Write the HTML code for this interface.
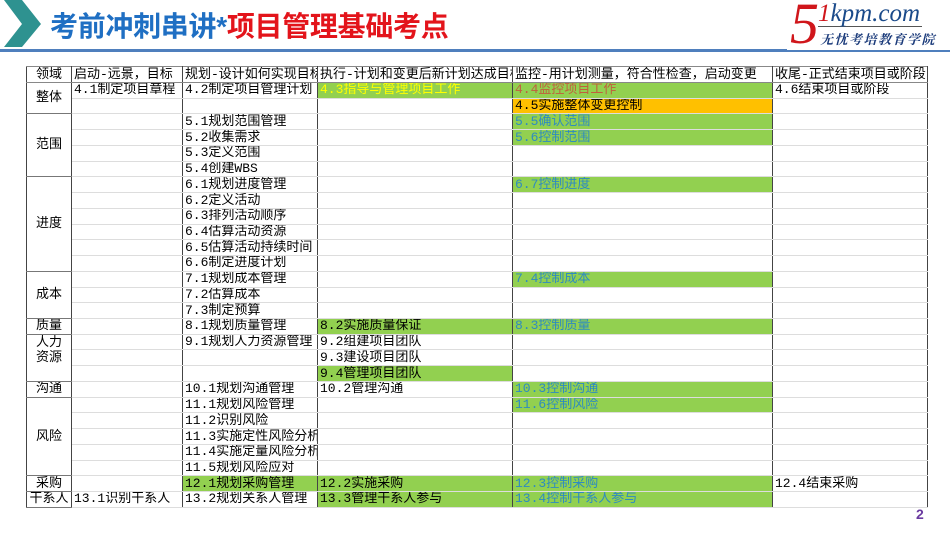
<!DOCTYPE html>
<html><head><meta charset="utf-8"><style>
body{margin:0;width:950px;height:535px;background:#fff;position:relative;overflow:hidden;font-family:"Liberation Sans","Noto Sans CJK SC",sans-serif}
.t{position:absolute;left:50px;top:5px;font-size:28px;font-weight:bold;letter-spacing:-0.3px;white-space:nowrap}
table{position:absolute;left:26px;top:66px;width:901px;border-collapse:collapse;table-layout:fixed;font-size:13px;font-family:"Liberation Mono","Noto Sans CJK SC",sans-serif}
td{height:14.74px;padding:0 0 0 2px;border-left:1px solid #444;border-right:1px solid #444;border-top:1px solid #ddd;border-bottom:1px solid #ddd;white-space:nowrap;overflow:hidden;line-height:14px;color:#000}
tr.h td{height:15px;border-bottom:1px solid #888;border-top:1px solid #888}
.d{text-align:center;padding:0;border-bottom:1px solid #777;border-top:1px solid #777}
.g{background:#92d050}.o{background:#ffc000}
.b{color:#2e8bc0}
</style></head><body>
<svg style="position:absolute;left:0;top:0" width="45" height="50"><polygon points="4,0 22,0 41,24 22,47 4,47 22,24" fill="#2e9290"/></svg>
<div style="position:absolute;left:0;top:49px;width:950px;height:3px;background:#4f7fbd"></div>
<div class="t"><span style="color:#1f6fc3">考前冲刺串讲*</span><span style="color:#e3141b">项目管理基础考点</span></div>
<div style="position:absolute;left:787px;top:0;width:163px;height:50px;background:#fff"></div>
<div style="position:absolute;left:790px;top:-4px;font-family:'Liberation Serif',serif;font-style:italic;font-size:58px;color:#d0161b;line-height:56px">5</div>
<div style="position:absolute;left:818px;top:1px;font-family:'Liberation Serif',serif;font-style:italic;font-size:25px;color:#1a4a8a;line-height:25px;border-bottom:1px solid #555;padding-right:2px"><span style="color:#d0161b">1</span>kpm.com</div>
<div style="position:absolute;left:820px;top:29px;font-family:'Noto Serif CJK SC',serif;font-weight:bold;font-style:italic;font-size:13px;color:#1a3a7a;letter-spacing:1.5px">无忧考培教育学院</div>
<table>
<colgroup><col style="width:45px"><col style="width:111px"><col style="width:135px"><col style="width:195px"><col style="width:260px"><col style="width:155px"></colgroup>
<tr class="h"><td class="d">领域</td><td>启动-远景，目标</td><td>规划-设计如何实现目标</td><td>执行-计划和变更后新计划达成目标</td><td>监控-用计划测量，符合性检查，启动变更</td><td>收尾-正式结束项目或阶段</td></tr>
<tr><td class="d" rowspan="2">整体</td><td>4.1制定项目章程</td><td>4.2制定项目管理计划</td><td class="g" style="color:#ffff00">4.3指导与管理项目工作</td><td class="g" style="color:#c0603d">4.4监控项目工作</td><td>4.6结束项目或阶段</td></tr>
<tr><td></td><td></td><td></td><td class="o">4.5实施整体变更控制</td><td></td></tr>
<tr><td class="d" rowspan="4">范围</td><td></td><td>5.1规划范围管理</td><td></td><td class="g b">5.5确认范围</td><td></td></tr>
<tr><td></td><td>5.2收集需求</td><td></td><td class="g b">5.6控制范围</td><td></td></tr>
<tr><td></td><td>5.3定义范围</td><td></td><td></td><td></td></tr>
<tr><td></td><td>5.4创建WBS</td><td></td><td></td><td></td></tr>
<tr><td class="d" rowspan="6">进度</td><td></td><td>6.1规划进度管理</td><td></td><td class="g b">6.7控制进度</td><td></td></tr>
<tr><td></td><td>6.2定义活动</td><td></td><td></td><td></td></tr>
<tr><td></td><td>6.3排列活动顺序</td><td></td><td></td><td></td></tr>
<tr><td></td><td>6.4估算活动资源</td><td></td><td></td><td></td></tr>
<tr><td></td><td>6.5估算活动持续时间</td><td></td><td></td><td></td></tr>
<tr><td></td><td>6.6制定进度计划</td><td></td><td></td><td></td></tr>
<tr><td class="d" rowspan="3">成本</td><td></td><td>7.1规划成本管理</td><td></td><td class="g b">7.4控制成本</td><td></td></tr>
<tr><td></td><td>7.2估算成本</td><td></td><td></td><td></td></tr>
<tr><td></td><td>7.3制定预算</td><td></td><td></td><td></td></tr>
<tr><td class="d">质量</td><td></td><td>8.1规划质量管理</td><td class="g">8.2实施质量保证</td><td class="g b">8.3控制质量</td><td></td></tr>
<tr><td class="d" rowspan="3" style="line-height:15px;vertical-align:top">人力<br>资源</td><td></td><td>9.1规划人力资源管理</td><td>9.2组建项目团队</td><td></td><td></td></tr>
<tr><td></td><td></td><td>9.3建设项目团队</td><td></td><td></td></tr>
<tr><td></td><td></td><td class="g">9.4管理项目团队</td><td></td><td></td></tr>
<tr><td class="d">沟通</td><td></td><td>10.1规划沟通管理</td><td>10.2管理沟通</td><td class="g b">10.3控制沟通</td><td></td></tr>
<tr><td class="d" rowspan="5">风险</td><td></td><td>11.1规划风险管理</td><td></td><td class="g b">11.6控制风险</td><td></td></tr>
<tr><td></td><td>11.2识别风险</td><td></td><td></td><td></td></tr>
<tr><td></td><td>11.3实施定性风险分析</td><td></td><td></td><td></td></tr>
<tr><td></td><td>11.4实施定量风险分析</td><td></td><td></td><td></td></tr>
<tr><td></td><td>11.5规划风险应对</td><td></td><td></td><td></td></tr>
<tr><td class="d">采购</td><td></td><td class="g">12.1规划采购管理</td><td class="g">12.2实施采购</td><td class="g b">12.3控制采购</td><td>12.4结束采购</td></tr>
<tr><td class="d">干系人</td><td>13.1识别干系人</td><td>13.2规划关系人管理</td><td class="g">13.3管理干系人参与</td><td class="g b">13.4控制干系人参与</td><td></td></tr>
</table>
<div style="position:absolute;left:916px;top:506px;font-size:14px;font-weight:bold;color:#6a3aa0">2</div>
</body></html>
